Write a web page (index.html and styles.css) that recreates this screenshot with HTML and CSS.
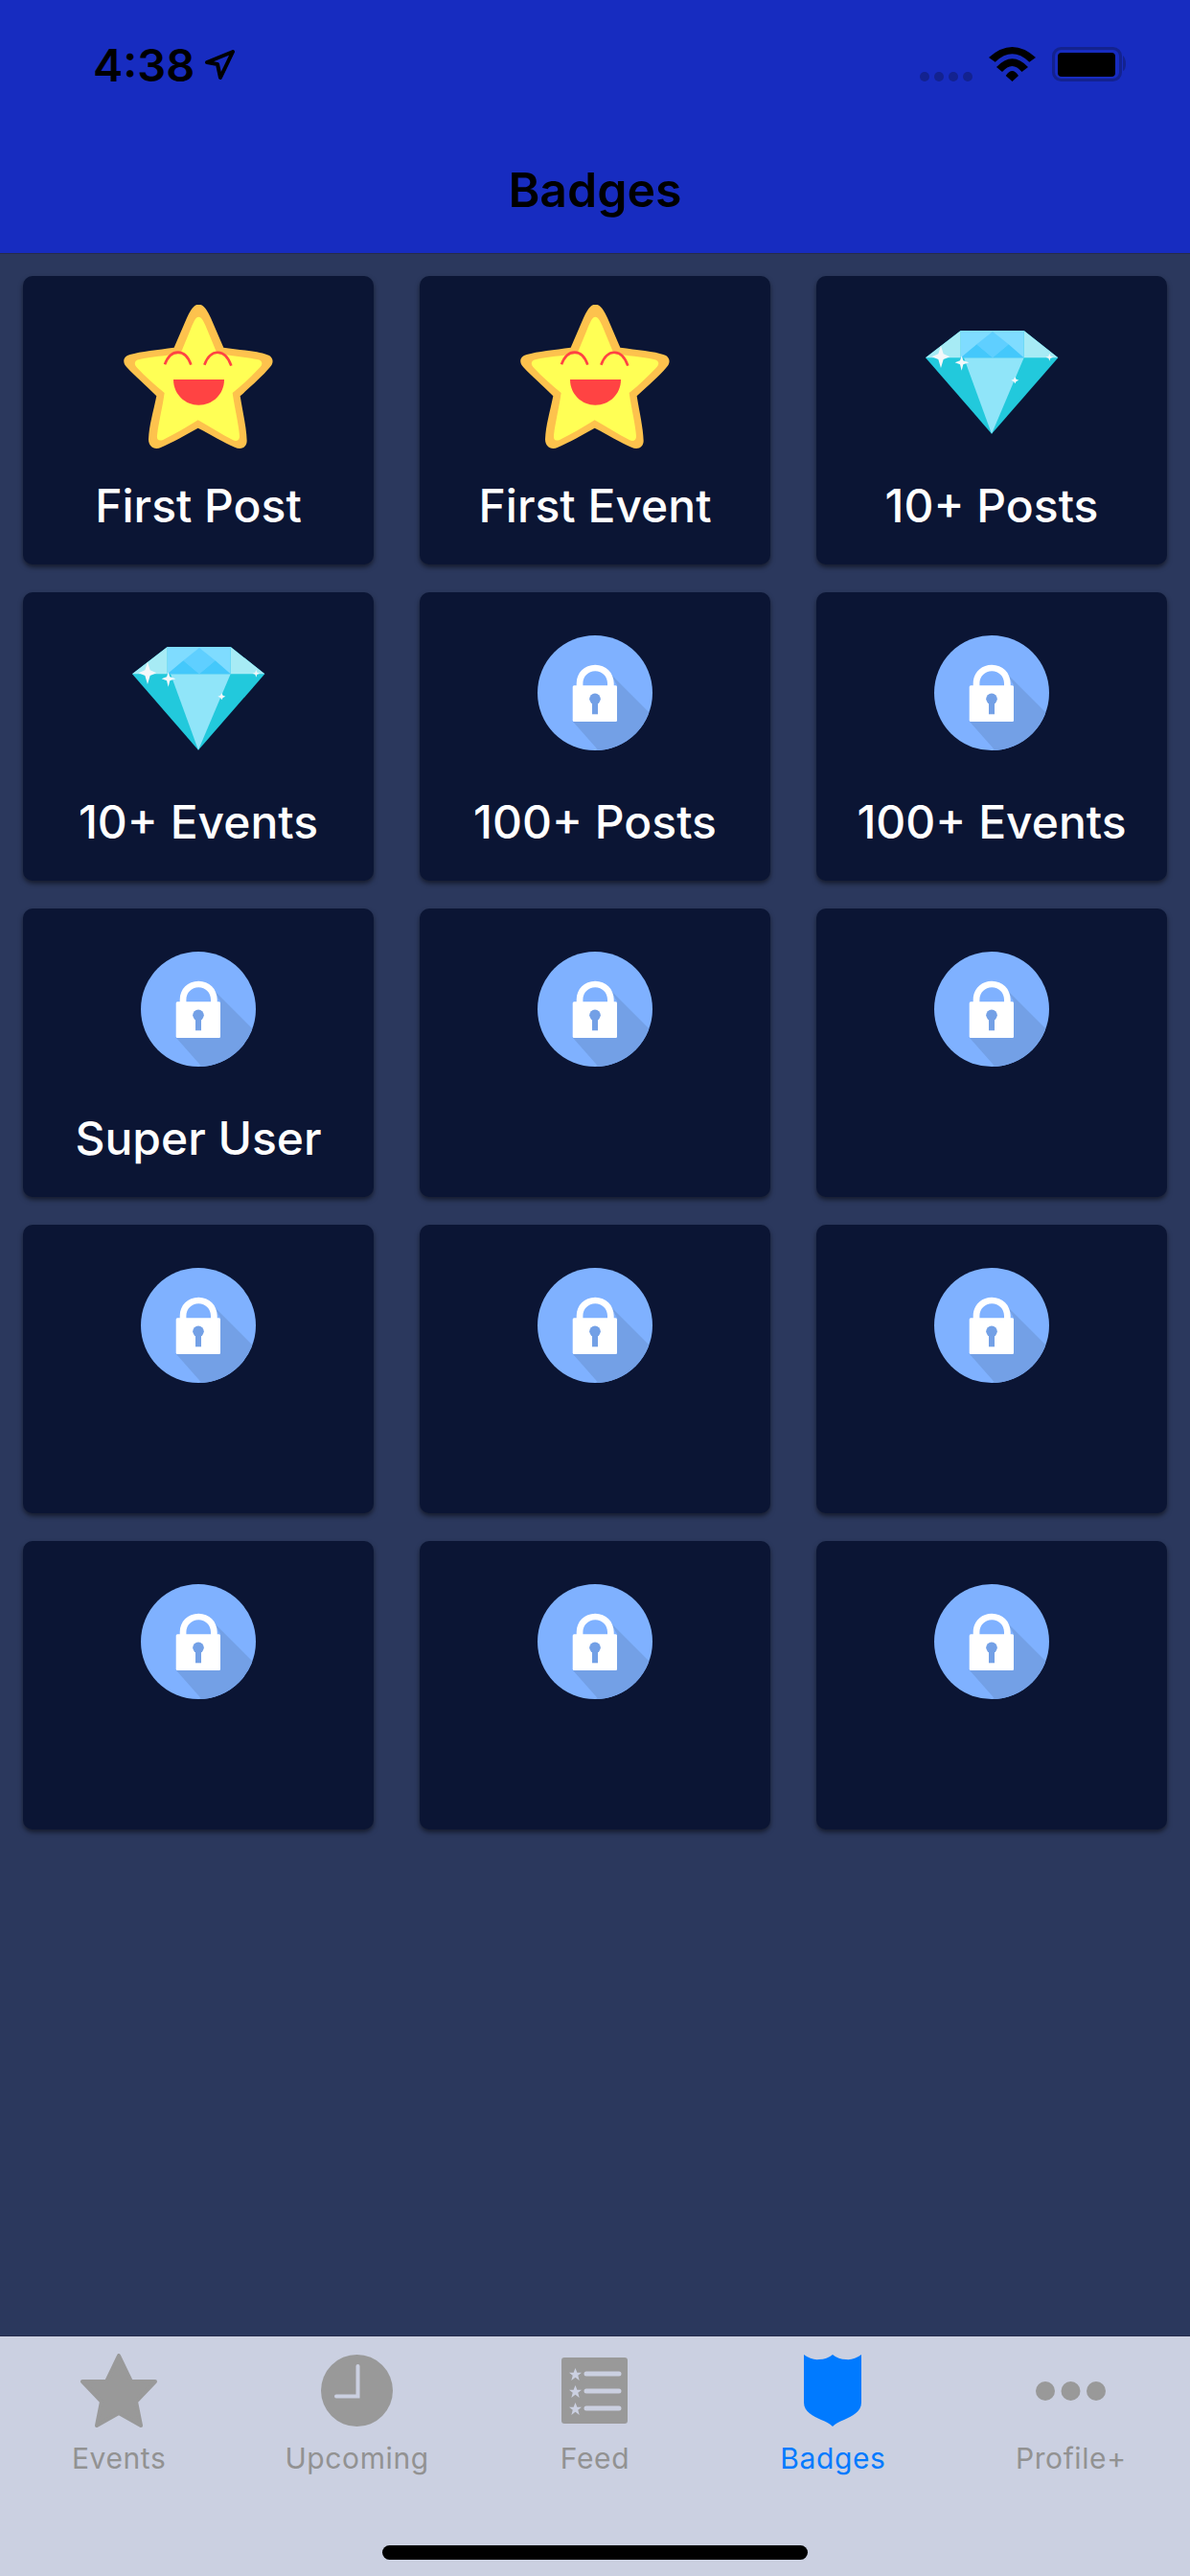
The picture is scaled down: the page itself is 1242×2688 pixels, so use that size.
FILE: index.html
```html
<!doctype html>
<html lang="en">
    <head>
        <meta charset="utf-8" />
        <meta name="viewport" content="width=device-width, initial-scale=1.0">
        <link rel="stylesheet" href="styles.css">
        <title>Badges</title>
    </head>
    <body>
        <!-- Shared icons -->
        <svg class="defs" width="0" height="0">
            <defs>
                <clipPath id="lock-clip"><circle cx="60" cy="60" r="60" /></clipPath>
                <symbol id="lock" viewBox="0 0 120 120">
                    <circle cx="60" cy="60" r="60" fill="#7fb1ff" />
                    <path clip-path="url(#lock-clip)" d="M76 40L140 104L90 150L37 90H83V52Z" fill="#73a0e6" />
                    <path d="M40.7 53V50C40.7 39 49 30.7 60.2 30.7C71.4 30.7 79.7 39 79.7 50V53H73V50C73 43 67.5 37.3 60.2 37.3C53 37.3 47.4 43 47.4 50V53Z" fill="#fff" />
                    <rect x="36.7" y="52.3" width="46.3" height="37.7" rx="1.5" fill="#fff" />
                    <circle cx="60" cy="66.3" r="5.8" fill="#73a0e6" />
                    <rect x="57" y="66" width="6" height="16.3" fill="#73a0e6" />
                </symbol>
                <symbol id="star-face" viewBox="387 144 468 450">
                    <path fill="#fdc24d" d="M622 143C640 143 650 165 660 185L700 278C750 285 810 290 835 300C855 305 860 325 845 340C820 370 790 395 752 430C760 480 772 530 773 570C773 590 755 600 735 590C700 575 660 550 620 530C580 552 540 575 505 590C485 600 465 590 465 565C467 520 480 480 490 430C455 395 425 370 397 340C380 322 388 305 407 300C440 290 495 285 545 278L585 185C595 165 605 143 622 143Z" />
                    <path fill="#ffff55" d="M622 182C632 182 640 200 650 225L680 298C720 303 770 308 805 315C822 318 825 330 812 342C785 370 760 395 728 420C735 470 748 520 750 555C750 570 740 572 730 568C695 550 655 525 620 505C585 527 545 550 512 566C498 572 490 568 492 553C497 510 508 470 515 420C485 395 455 370 430 342C418 330 420 318 437 315C470 308 520 303 565 298L595 225C605 200 612 182 622 182Z" />
                    <path fill="none" stroke="#ff4343" stroke-width="8" d="M516 331C535 280 580 280 598 332M640 332C660 280 705 280 724 335" />
                    <path fill="#ff4343" d="M543 378H702C702 425 665 458 622 458C580 458 543 425 543 378Z" />
                </symbol>
                <symbol id="diamond" viewBox="332 144 450 450">
                    <path fill="#22c9dc" d="M350 310L460 225H658L765 310L557 548Z" />
                    <path fill="#90e5f9" d="M470 310H658L557 548Z" />
                    <path fill="#a7ebf5" d="M350 310L460 225V310ZM658 225L765 310H658Z" />
                    <path fill="#7fdcff" d="M460 225H658V310H460Z" />
                    <path fill="#5fcfff" d="M510 268L560 228L610 268L560 310Z" />
                    <path fill="#44c8fb" d="M460 310L510 268L560 310ZM560 310L610 268L658 310Z" />
                    <path fill="#f4f8fa" d="M398 272L406 298L426 307L406 315L398 342L390 315L370 307L390 298Z" />
                    <path fill="#f4f8fa" d="M463 304L468 319L486 325L468 331L463 350L458 331L442 325L458 319Z" />
                    <path fill="#f4f8fa" d="M738 296L741 305L750 308L741 311L738 320L735 311L726 308L735 305Z" />
                    <path fill="#f4f8fa" d="M630 370L634 377L642 380L634 384L630 391L626 384L618 380L626 377Z" />
                </symbol>
                <symbol id="mini-star" viewBox="0 0 14 14">
                    <path d="M7 0L9 5H14L10 8.300L11.500 14L7 10.500L2.500 14L4 8.300L0 5H5Z" />
                </symbol>
            </defs>
        </svg>

        <div class="app">
            <header class="top">
                <div class="status">
                    <div class="status-left">
                        <span class="time">4:38</span>
                        <svg class="arrow" width="31" height="31" viewBox="0 0 31 31"><path d="M2 13L29 2L16 29L13 15Z" /></svg>
                    </div>
                    <div class="status-right">
                        <div class="signal"><i></i><i></i><i></i><i></i></div>
                        <svg width="49" height="36" viewBox="0 0 49 36"><path d="M0 11Q24.500 -11 49 11L42.300 15.700Q24.500 -1.100 6.700 15.700ZM8 21Q24.500 3.600 41 21L34.500 26Q24.500 14 14 26ZM17.700 30Q24.500 20 31 30L24.500 36Z" /></svg>
                        <svg width="79" height="36" viewBox="0 0 79 36">
                            <rect x="1.500" y="1.500" width="70" height="33" rx="8" fill="none" stroke="#13228f" stroke-width="3" />
                            <rect x="6" y="6" width="60" height="25" rx="4" />
                            <path d="M74 9C78 12 78 24 74 25Z" fill="#13228f" />
                        </svg>
                    </div>
                </div>
                <h1 class="title">Badges</h1>
            </header>

            <main class="badges">
                <div class="card">
                    <div class="icon"><svg class="star-icon"><use href="#star-face" /></svg></div>
                    <span class="label">First Post</span>
                </div>
                <div class="card">
                    <div class="icon"><svg class="star-icon"><use href="#star-face" /></svg></div>
                    <span class="label">First Event</span>
                </div>
                <div class="card">
                    <div class="icon"><svg class="diamond-icon"><use href="#diamond" /></svg></div>
                    <span class="label">10+ Posts</span>
                </div>
                <div class="card">
                    <div class="icon"><svg class="diamond-icon"><use href="#diamond" /></svg></div>
                    <span class="label">10+ Events</span>
                </div>
                <div class="card">
                    <div class="icon"><svg class="lock-icon"><use href="#lock" /></svg></div>
                    <span class="label">100+ Posts</span>
                </div>
                <div class="card">
                    <div class="icon"><svg class="lock-icon"><use href="#lock" /></svg></div>
                    <span class="label">100+ Events</span>
                </div>
                <div class="card">
                    <div class="icon"><svg class="lock-icon"><use href="#lock" /></svg></div>
                    <span class="label">Super User</span>
                </div>
                <div class="card"><div class="icon"><svg class="lock-icon"><use href="#lock" /></svg></div></div>
                <div class="card"><div class="icon"><svg class="lock-icon"><use href="#lock" /></svg></div></div>
                <div class="card"><div class="icon"><svg class="lock-icon"><use href="#lock" /></svg></div></div>
                <div class="card"><div class="icon"><svg class="lock-icon"><use href="#lock" /></svg></div></div>
                <div class="card"><div class="icon"><svg class="lock-icon"><use href="#lock" /></svg></div></div>
                <div class="card"><div class="icon"><svg class="lock-icon"><use href="#lock" /></svg></div></div>
                <div class="card"><div class="icon"><svg class="lock-icon"><use href="#lock" /></svg></div></div>
                <div class="card"><div class="icon"><svg class="lock-icon"><use href="#lock" /></svg></div></div>
            </main>

            <footer class="tabbar">
                <nav class="tabs">
                    <div class="tab">
                        <div class="tab-icon">
                            <svg width="80" height="77" viewBox="0 0 80 77"><path class="rounded" d="M40 2L53 29H78L58 50L63 75L40 62L17 75L22 50L2 29H27Z" /></svg>
                        </div>
                        <span>Events</span>
                    </div>
                    <div class="tab">
                        <div class="tab-icon">
                            <svg width="75" height="75" viewBox="0 0 75 75">
                                <circle cx="37.500" cy="37.500" r="37.500" />
                                <path class="cut" d="M38.500 12V43.500H16" />
                            </svg>
                        </div>
                        <span>Upcoming</span>
                    </div>
                    <div class="tab">
                        <div class="tab-icon">
                            <svg class="feed" width="69" height="69" viewBox="0 0 69 69">
                                <rect width="69" height="69" rx="3" />
                                <use class="feed-star" href="#mini-star" x="8" y="11" width="13" height="13" />
                                <use class="feed-star" href="#mini-star" x="8" y="29" width="13" height="13" />
                                <use class="feed-star" href="#mini-star" x="8" y="47" width="13" height="13" />
                                <path class="cut" d="M26 17H60M26 35H60M26 53H60" />
                            </svg>
                        </div>
                        <span>Feed</span>
                    </div>
                    <div class="tab active">
                        <div class="tab-icon">
                            <svg width="60" height="75" viewBox="0 0 60 75"><path d="M0 0Q8 6 16 5Q24 5 30 0Q36 5 44 5Q52 6 60 0V50C60 60 50 64 42 68Q34 71 30 75Q26 71 18 68C10 64 0 60 0 50Z" /></svg>
                        </div>
                        <span>Badges</span>
                    </div>
                    <div class="tab">
                        <div class="tab-icon">
                            <svg width="73" height="20" viewBox="0 0 73 20">
                                <circle cx="10" cy="10" r="10" />
                                <circle cx="36.500" cy="10" r="10" />
                                <circle cx="63" cy="10" r="10" />
                            </svg>
                        </div>
                        <span>Profile+</span>
                    </div>
                </nav>
                <div class="home-bar"></div>
            </footer>
        </div>
    </body>
</html>
```
FILE: styles.css
```css
* {
    margin: 0px;
    box-sizing: border-box;
    font-family: Inter, "Liberation Sans", sans-serif;
}
body {
    background-color: #2b385d;
}
.defs {
    display: block;
}
.app {
    display: flex;
    flex-direction: column;
    height: 2688px;
}

/* Header */
.top {
    height: 265px;
    color: #000;
    background-color: #172cc0;
    border-bottom: 1px solid #262c4d;
}
.status {
    display: flex;
    justify-content: space-between;
    height: 36px;
    margin-top: 49px;
    padding: 0 65px 0 97px;
}
.status-left {
    display: flex;
    gap: 11px;
    align-items: center;
}
.time {
    font-size: 47px;
    font-weight: 600;
    line-height: 38px;
    margin-top: 2px;
}
.arrow path {
    fill: none;
    stroke: #000;
    stroke-width: 4;
    stroke-linejoin: round;
}
.status-right {
    display: flex;
    gap: 17px;
}
.signal {
    display: flex;
    gap: 5px;
    align-items: flex-end;
}
.signal i {
    width: 10px;
    height: 10px;
    border-radius: 50%;
    background-color: #13228f;
}
.title {
    margin-top: 83px;
    text-align: center;
    font-size: 50px;
    font-weight: 600;
    line-height: 60px;
}

/* Badge grid */
.badges {
    flex: 1;
    display: grid;
    grid-template-columns: repeat(3, 1fr);
    grid-auto-rows: 301px;
    gap: 29px 48px;
    padding: 23px 24px 0;
}
.card {
    display: flex;
    flex-direction: column;
    align-items: center;
    padding-top: 30px;
    border-radius: 10px;
    background-color: #0b1534;
    box-shadow: 0 3px 5px rgba(0, 0, 0, 0.5);
}
.icon {
    display: flex;
    align-items: center;
    justify-content: center;
    height: 150px;
}
.star-icon {
    width: 156px;
    height: 150px;
}
.diamond-icon {
    width: 150px;
    height: 150px;
}
.lock-icon {
    width: 120px;
    height: 120px;
}
.label {
    margin-top: 35px;
    color: #fff;
    font-size: 48px;
    font-weight: 500;
    line-height: 50px;
}

/* Tab bar */
.tabbar {
    height: 251px;
    background-color: #cbd0e1;
    border-top: 1px solid #262c4d;
}
.tabs {
    display: grid;
    grid-template-columns: repeat(5, 1fr);
    padding-top: 18px;
}
.tab {
    display: flex;
    flex-direction: column;
    align-items: center;
    color: #929292;
    fill: #999;
    font-size: 30px;
    letter-spacing: 0.6px;
    line-height: 36px;
}
.tab-icon {
    display: flex;
    align-items: center;
    justify-content: center;
    height: 77px;
    margin-bottom: 14px;
}
.active {
    color: #007aff;
    fill: #007aff;
}
.rounded {
    stroke: #999;
    stroke-width: 4;
    stroke-linejoin: round;
}
.cut {
    fill: none;
    stroke: #cbd0e1;
    stroke-width: 4;
    stroke-linecap: round;
}
.feed .cut {
    stroke-width: 5;
}
.feed-star {
    fill: #cbd0e1;
}
.home-bar {
    width: 444px;
    height: 15px;
    margin: 73px auto 0;
    border-radius: 8px;
    background-color: #000;
}
```
